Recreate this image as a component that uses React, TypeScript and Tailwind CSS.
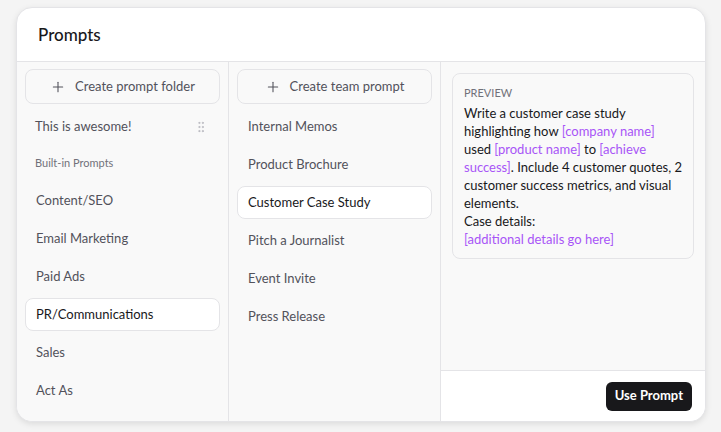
import { Plus, GripVertical } from 'lucide-react'

const folders = ['Content/SEO', 'Email Marketing', 'Paid Ads', 'PR/Communications', 'Sales', 'Act As']
const prompts = ['Internal Memos', 'Product Brochure', 'Customer Case Study', 'Pitch a Journalist', 'Event Invite', 'Press Release']

function Item({ label, active }: { label: string; active?: boolean }) {
  return (
    <div
      className={`flex h-[33px] items-center rounded-lg border px-[10px] text-[13px] ${
        active ? 'border-[#e4e4e7] bg-white text-[#18181b]' : 'border-transparent text-[#52525b]'
      }`}
    >
      {label}
    </div>
  )
}

function CreateButton({ label }: { label: string }) {
  return (
    <button className="mb-[1px] flex h-[35px] w-full items-center justify-center gap-[9px] rounded-lg border border-[#e4e4e7] bg-[#f9f9f9] text-[13px] text-[#52525b]">
      <Plus className="h-[16px] w-[16px]" strokeWidth={1.6} />
      {label}
    </button>
  )
}

const Var = ({ children }: { children: string }) => <span className="text-[#a855f7]">{children}</span>

export default function App() {
  return (
    <div className="min-h-screen bg-[#f4f4f4] px-4 pt-[7px] font-['Lato',sans-serif]">
      <div className="flex h-[415px] w-[690px] flex-col overflow-hidden rounded-2xl border border-[#e4e4e7] bg-white shadow-[0_2px_6px_rgba(0,0,0,0.1)]">
        <div className="flex h-[54px] shrink-0 items-center border-b border-[#e4e4e7] px-[21px] text-[17px] font-medium text-[#18181b]">
          Prompts
        </div>
        <div className="flex min-h-0 flex-1">
          <div className="flex w-[212px] shrink-0 flex-col gap-[5px] border-r border-[#e4e4e7] bg-[#f9f9f9] px-2 pt-[7px]">
            <CreateButton label="Create prompt folder" />
            <div className="flex h-[33px] items-center justify-between rounded-lg pl-[10px] pr-[12px] text-[13px] text-[#52525b]">
              This is awesome!
              <GripVertical className="h-[14px] w-[14px] text-[#b4b4bb]" strokeWidth={1.5} />
            </div>
            <div className="flex h-[31px] items-center px-[10px] text-[11px] text-[#71717a]">Built-in Prompts</div>
            {folders.map((f) => (
              <Item key={f} label={f} active={f === 'PR/Communications'} />
            ))}
          </div>
          <div className="flex w-[212px] shrink-0 flex-col gap-[5px] border-r border-[#e4e4e7] bg-[#f9f9f9] px-2 pt-[7px]">
            <CreateButton label="Create team prompt" />
            {prompts.map((p) => (
              <Item key={p} label={p} active={p === 'Customer Case Study'} />
            ))}
          </div>
          <div className="flex min-w-0 flex-1 flex-col">
            <div className="flex-1 bg-[#f9f9f9] px-[11px] pt-[11px]">
              <div className="rounded-lg border border-[#e4e4e7] bg-[#f9f9f9] px-[11px] pb-[10px] pt-[11px]">
                <div className="text-[11px] uppercase leading-[16px] text-[#71717a]">Preview</div>
                <p className="mt-[3px] text-[13px] leading-[18px] text-[#18181b]">
                  Write a customer case study highlighting how <Var>[company name]</Var> used{' '}
                  <Var>[product name]</Var> to <Var>[achieve success]</Var>. Include 4 customer quotes, 2 customer
                  success metrics, and visual elements.
                  <br />
                  Case details:
                  <br />
                  <Var>[additional details go here]</Var>
                </p>
              </div>
            </div>
            <div className="flex h-[51px] shrink-0 items-center justify-end border-t border-[#e4e4e7] bg-white px-[13px]">
              <button className="h-[29px] rounded-md bg-[#18181b] px-[9px] text-[13px] font-bold text-white">
                Use Prompt
              </button>
            </div>
          </div>
        </div>
      </div>
    </div>
  )
}
